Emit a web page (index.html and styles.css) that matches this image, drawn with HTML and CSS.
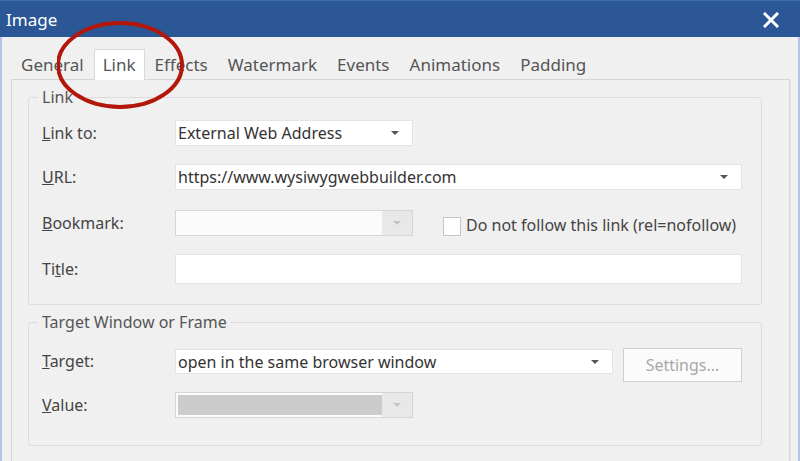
FILE: index.html
```html
<!DOCTYPE html>
<html>
<head>
<meta charset="utf-8">
<link rel="stylesheet" href="styles.css">
</head>
<body>
<div class="dialog">
  <header class="titlebar">
    <span class="title">Image</span>
    <svg class="close" width="16" height="16" viewBox="0 0 16 16"><path d="M2 2 L14 14 M14 2 L2 14" stroke="#fff" stroke-width="3" stroke-linecap="square"/></svg>
  </header>
  <div class="client">
    <nav class="tabs">
      <span class="tab">General</span>
      <span class="tab tab-active">Link</span>
      <span class="tab">Effects</span>
      <span class="tab">Watermark</span>
      <span class="tab">Events</span>
      <span class="tab">Animations</span>
      <span class="tab">Padding</span>
    </nav>
    <div class="panel">
      <fieldset class="group group-link">
        <legend>Link</legend>
        <div class="row row-linkto">
          <span class="label"><u>L</u>ink to:</span>
          <div class="select select-short"><span class="value">External Web Address</span><span class="arrow"></span></div>
        </div>
        <div class="row row-url">
          <span class="label"><u>U</u>RL:</span>
          <div class="select select-wide"><span class="value">https://www.wysiwygwebbuilder.com</span><span class="arrow"></span></div>
        </div>
        <div class="row row-bookmark">
          <span class="label"><u>B</u>ookmark:</span>
          <div class="select select-short select-disabled"><span class="value"></span><span class="dbtn"><span class="arrow arrow-light"></span></span></div>
          <span class="check"></span>
          <span class="check-label">Do not follow this link (rel=nofollow)</span>
        </div>
        <div class="row row-title">
          <span class="label">Ti<u>t</u>le:</span>
          <div class="input input-wide"></div>
        </div>
      </fieldset>
      <fieldset class="group group-target">
        <legend>Target Window or Frame</legend>
        <div class="row row-target">
          <span class="label label-target"><u>T</u>arget:</span>
          <div class="select select-target"><span class="value">open in the same browser window</span><span class="arrow"></span></div>
          <span class="button">Settings...</span>
        </div>
        <div class="row row-value">
          <span class="label"><u>V</u>alue:</span>
          <div class="select select-short select-disabled"><span class="fill"></span><span class="dbtn"><span class="arrow arrow-light"></span></span></div>
        </div>
      </fieldset>
    </div>
  </div>
  <svg class="highlight" width="140" height="100" viewBox="0 0 140 100"><ellipse cx="63" cy="44" rx="62" ry="42" fill="none" stroke="#b3170c" stroke-width="4"/></svg>
</div>
</body>
</html>
```

FILE: styles.css
```css
html, body {
  margin: 0;
  padding: 0;
}
body {
  width: 800px;
  height: 461px;
  overflow: hidden;
  background: #f0f0f0;
  font-family: "Noto Sans", "Open Sans", sans-serif;
  font-size: 16px;
  color: #444;
}
.dialog {
  position: relative;
  width: 800px;
  height: 461px;
}
.titlebar {
  height: 37px;
  background: #2b5797;
  border-top: 1px solid #3d6cb0;
  box-sizing: border-box;
  display: flex;
  align-items: center;
  padding-left: 6px;
}
.title {
  color: #fff;
  font-size: 17px;
  line-height: 1;
}
.close {
  margin-left: auto;
  margin-right: 21px;
  margin-top: 1px;
}
.client {
  height: 424px;
  box-sizing: border-box;
  border-left: 2px solid #b8c3ea;
  border-right: 2px solid #b8c3ea;
  padding: 13px 8px 0 9px;
  overflow: hidden;
}
.tabs {
  display: flex;
  height: 29px;
  align-items: flex-end;
}
.tab {
  padding: 0 10px;
  line-height: 28px;
  color: #555;
  font-size: 17px;
}
.tab-active {
  position: relative;
  z-index: 1;
  background: #fff;
  border: 1px solid #d9d9d9;
  border-bottom: none;
  line-height: 30px;
  margin-bottom: -1px;
  padding: 0 8px;
}
.panel {
  border: 1px solid #d6d6d6;
  box-shadow: 1px 0 0 #e6e6e6;
  height: 420px;
  padding: 7px 27px 0 16px;
}
.group {
  margin: 0;
  border: 1px solid #dcdcdc;
  border-radius: 3px;
  padding: 13px 18px 20px 13px;
  min-width: 0;
}
.group legend {
  padding: 0 4px;
  margin-left: -4px;
  line-height: 20px;
  color: #555;
}
.group-target {
  margin-top: 7px;
  padding-top: 16px;
  padding-bottom: 27px;
}
.row {
  display: flex;
  align-items: center;
}
.row-linkto { height: 26px; margin-bottom: 18px; }
.row-url { height: 26px; margin-bottom: 20px; }
.row-bookmark { height: 26px; margin-bottom: 18px; }
.row-title { height: 30px; }
.row-target { align-items: flex-start; height: 34px; margin-bottom: 10px; }
.row-value { height: 26px; }
.label {
  width: 133px;
  flex: none;
  color: #444;
}
.label-target {
  line-height: 26px;
}
.select, .input {
  box-sizing: border-box;
  height: 26px;
  background: #fff;
  border: 1px solid #e4e4e4;
  display: flex;
  align-items: center;
}
.select .value {
  flex: 1;
  padding-left: 2px;
  color: #333;
  white-space: nowrap;
  overflow: hidden;
}
.arrow {
  width: 0;
  height: 0;
  border-left: 4px solid transparent;
  border-right: 4px solid transparent;
  border-top: 4px solid #555;
  margin-right: 13px;
}
.arrow-light {
  border-top-color: #c4c4c4;
  margin: 0;
}
.select-short { width: 238px; }
.select-wide, .input-wide { width: 567px; }
.input-wide { height: 30px; }
.select-target {
  width: 438px;
  height: 25px;
  margin-top: 1px;
}
.select-disabled {
  background: #fbfbfb;
  border-color: #d6d6d6;
}
.dbtn {
  margin-left: auto;
  width: 30px;
  height: 24px;
  background: #e8e8e8;
  display: flex;
  align-items: center;
  justify-content: center;
}
.fill {
  flex: 1;
  height: 20px;
  margin-left: 2px;
  background: #cccccc;
}
.check {
  box-sizing: border-box;
  width: 18px;
  height: 19px;
  border: 1px solid #c6c6c6;
  background: #fff;
  margin-left: 30px;
  margin-top: 7px;
}
.check-label {
  margin-left: 5px;
  color: #444;
  margin-top: 4px;
}
.button {
  box-sizing: border-box;
  width: 119px;
  height: 34px;
  margin-left: 10px;
  border: 1px solid #cfcfcf;
  background: #fbfbfb;
  color: #a8a8a8;
  display: flex;
  align-items: center;
  justify-content: center;
}
.highlight {
  position: absolute;
  left: 57px;
  top: 21px;
}
```
